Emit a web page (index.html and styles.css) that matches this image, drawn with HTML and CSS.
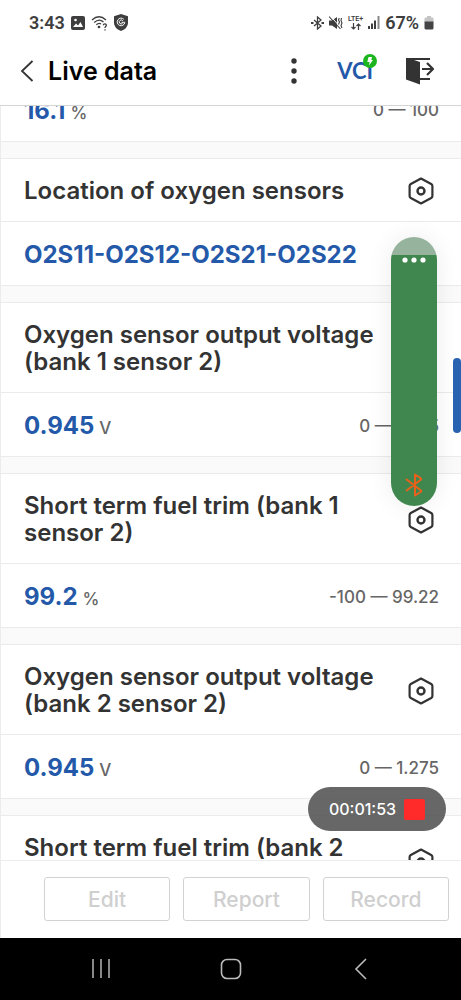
FILE: index.html
```html
<!DOCTYPE html>
<html lang="en">
<head>
<meta charset="utf-8">
<meta name="viewport" content="width=device-width, initial-scale=1">
<title>Live data</title>
<link rel="stylesheet" href="styles.css">
</head>
<body>
<svg class="defs" aria-hidden="true">
  <symbol id="hex" viewBox="0 0 28 28">
    <path d="M14 1.500 24.200 7Q25.400 7.700 25.400 9V19Q25.400 20.300 24.200 21L14 26.500 3.800 21Q2.600 20.300 2.600 19V9Q2.600 7.700 3.800 7Z" fill="none" stroke="#333" stroke-width="2.200" stroke-linejoin="round"/>
    <circle cx="14" cy="14" r="3.500" fill="none" stroke="#333" stroke-width="2.400"/>
  </symbol>
</svg>
<div class="app">
  <div class="status">
    <div class="status-group status-left">
      <span class="clock">3:43</span>
      <svg width="14" height="14" viewBox="0 0 14 14"><rect width="14" height="14" rx="2" fill="#3e3e3e"/><path d="M2 11 5 7.500 7 9.500 9.500 6 12 11Z" fill="#fff"/><circle cx="4.500" cy="4" r="1.300" fill="#fff"/></svg>
      <svg width="17" height="16" viewBox="0 0 17 16" fill="none" stroke="#3e3e3e" stroke-width="1.300"><path d="M1 5Q8 -1.500 15 5M3.200 7.500Q8 3 12.500 7M5.300 9.800Q8 7.500 10 9"/><circle cx="8" cy="12" r=".7"/><path d="M12.300 10.300C12.300 8.300 15.500 8.500 15.300 10.400 15.200 11.700 14 11.500 14 13M14 14.200V15.500"/></svg>
      <svg width="14" height="17" viewBox="0 0 14 17"><path d="M7 0 14 2.200V9Q14 14 7 17 0 14 0 9V2.200Z" fill="#3e3e3e"/><path d="M9.800 5.300A3.800 3.800 0 1 0 10.800 8.500M8.800 6.700A2 2 0 1 0 8.500 9.500M10.800 8.300H7.500" fill="none" stroke="#fff" stroke-width="1"/></svg>
    </div>
    <div class="status-group status-right">
      <svg width="13" height="14" viewBox="0 0 13 14" fill="none" stroke="#3e3e3e" stroke-width="1.300"><path d="M3 4 10 10 6.500 13V1L10 4 3 10"/><path d="M0 7H2.500M10.500 7H13" stroke-width="2"/></svg>
      <svg width="14" height="14" viewBox="0 0 14 14"><path d="M0 4.500H3L8 1V13L3 9.500H0Z" fill="#3e3e3e"/><path d="M1.500 0 12 12" stroke="#fff" stroke-width="1"/><path d="M0 .5 11.500 13M10.300 2 9.500 4 10.500 6 9.500 8.500M12.500 2 12 4.500 13 7 12 9.500 13 12" fill="none" stroke="#3e3e3e" stroke-width="1.100"/></svg>
      <span class="lte"><span>LTE+</span><svg width="10" height="7" viewBox="0 0 10 7" fill="none" stroke="#3e3e3e" stroke-width="1.200"><path d="M2.500 0V6M.5 4 2.500 6 4.500 4M7.500 7V1M5.500 3 7.500 1 9.500 3"/></svg></span>
      <svg width="12" height="13" viewBox="0 0 12 13" fill="#3e3e3e"><path d="M0 10H2V13H0ZM3 7.500H5V13H3ZM6 4.500H8V13H6Z"/><path d="M9.500 0H11.500V13H9.500Z" fill="#888"/></svg>
      <span class="battery">67%</span>
      <svg width="10" height="14" viewBox="0 0 10 14"><path d="M3 0H7V1.500H8.500Q9.500 1.500 9.500 2.500V6H.5V2.500Q.5 1.500 1.500 1.500H3Z" fill="#c4c4c4"/><path d="M.5 5.500H9.500V12Q9.500 13.500 8 13.500H2Q.5 13.500 .5 12Z" fill="#444"/></svg>
    </div>
  </div>

  <header class="topbar">
    <button class="icon-btn" aria-label="Back"><svg width="14" height="22" viewBox="0 0 14 22"><path d="M12.500 1 2 11 12.500 21" fill="none" stroke="#333" stroke-width="1.800"/></svg></button>
    <h1>Live data</h1>
    <button class="icon-btn more" aria-label="More"><svg width="6" height="28" viewBox="0 0 6 28" fill="#333"><circle cx="3" cy="4" r="2.700"/><circle cx="3" cy="14" r="2.700"/><circle cx="3" cy="24" r="2.700"/></svg></button>
    <button class="vci">VCI<svg class="vci-badge" width="14" height="14" viewBox="0 0 14 14" aria-hidden="true"><circle cx="7" cy="7" r="7" fill="#1db51d"/><path d="M5.500 3H9L8.300 6H10L6 11.500 6.600 8H4.300Z" fill="#fff"/></svg></button>
    <button class="icon-btn" aria-label="Exit"><svg width="28" height="28" viewBox="0 0 28 28"><path d="M0 1H24V3H8L14 5V27.500L0 22.500Z" fill="#333"/><path d="M14 22H24M16 12H26M21 6 27 12 21 18" fill="none" stroke="#333" stroke-width="2.200"/></svg></button>
  </header>

  <main class="list">
    <section class="card">
      <div class="reading"><span class="value">16.1<small>%</small></span><span class="range">0 — 100</span></div>
    </section>
    <section class="card">
      <div class="head"><h2>Location of oxygen sensors</h2><button class="icon-btn" aria-label="Settings"><svg width="28" height="28"><use href="#hex"/></svg></button></div>
      <div class="reading"><span class="value">O2S11-O2S12-O2S21-O2S22</span></div>
    </section>
    <section class="card">
      <div class="head"><h2>Oxygen sensor output voltage (bank 1 sensor 2)</h2><button class="icon-btn" aria-label="Settings"><svg width="28" height="28"><use href="#hex"/></svg></button></div>
      <div class="reading"><span class="value">0.945<small>V</small></span><span class="range">0 — 1.275</span></div>
    </section>
    <section class="card">
      <div class="head"><h2>Short term fuel trim (bank 1 sensor 2)</h2><button class="icon-btn" aria-label="Settings"><svg width="28" height="28"><use href="#hex"/></svg></button></div>
      <div class="reading"><span class="value">99.2<small>%</small></span><span class="range">-100 — 99.22</span></div>
    </section>
    <section class="card">
      <div class="head"><h2>Oxygen sensor output voltage (bank 2 sensor 2)</h2><button class="icon-btn" aria-label="Settings"><svg width="28" height="28"><use href="#hex"/></svg></button></div>
      <div class="reading"><span class="value">0.945<small>V</small></span><span class="range">0 — 1.275</span></div>
    </section>
    <section class="card">
      <div class="head"><h2>Short term fuel trim (bank 2 sensor 2)</h2><button class="icon-btn" aria-label="Settings"><svg width="28" height="28"><use href="#hex"/></svg></button></div>
    </section>
  </main>

  <footer class="actions">
    <button class="action" disabled>Edit</button>
    <button class="action" disabled>Report</button>
    <button class="action" disabled>Record</button>
  </footer>

  <nav class="sysnav">
    <button class="icon-btn" aria-label="Recent apps"><svg width="22" height="22" viewBox="0 0 22 22"><path d="M3 1V20M11 1V20M19 1V20" stroke="#aaa" stroke-width="1.600"/></svg></button>
    <button class="icon-btn" aria-label="Home"><svg width="22" height="22" viewBox="0 0 22 22"><rect x="1.500" y="1.500" width="19" height="19" rx="5.500" fill="none" stroke="#bbb" stroke-width="1.600"/></svg></button>
    <button class="icon-btn" aria-label="Back"><svg width="22" height="22" viewBox="0 0 22 22"><path d="M16 1 6 11 16 21" fill="none" stroke="#bbb" stroke-width="1.600"/></svg></button>
  </nav>

  <aside class="voltage" aria-label="Vehicle voltage">
    <svg width="24" height="6" viewBox="0 0 24 6" fill="#fff"><circle cx="3" cy="3" r="2.600"/><circle cx="12" cy="3" r="2.600"/><circle cx="21" cy="3" r="2.600"/></svg>
    <svg width="18" height="24" viewBox="0 0 18 24"><path d="M1 6 16 17.500Q16.500 18.500 15.500 19L10 22.500V1.500L15.500 5Q16.500 5.700 16 6.500L1 18" fill="none" stroke="#e8611c" stroke-width="2" stroke-linejoin="round"/></svg>
  </aside>
  <span class="scroll-handle"></span>
  <button class="recorder" aria-label="Stop recording"><span>00:01:53</span><i class="stop"></i></button>
</div>
</body>
</html>
```
FILE: styles.css
```css
* { box-sizing: border-box; }
body {
  margin: 0;
  font-family: Inter, "Open Sans", sans-serif;
  color: #333;
  background: #fff;
}
button {
  margin: 0;
  padding: 0;
  border: 0;
  background: none;
  font: inherit;
  color: inherit;
}
svg { display: block; }
.defs { position: absolute; width: 0; height: 0; }
.app {
  position: relative;
  display: flex;
  flex-direction: column;
  height: 100vh;
  overflow: hidden;
}
.icon-btn { display: flex; flex: none; }

.status {
  display: flex;
  justify-content: space-between;
  align-items: center;
  height: 40px;
  padding: 5px 27px 0 29px;
  color: #3e3e3e;
  font-family: Roboto, sans-serif;
  font-weight: 600;
}
.status-group { display: flex; align-items: center; }
.status-left { gap: 6px; }
.status-right { gap: 5px; }
.clock, .battery { font-size: 18px; }
.lte {
  display: flex;
  flex-direction: column;
  align-items: center;
  font-size: 7px;
  line-height: 8px;
}

.topbar {
  display: flex;
  align-items: center;
  height: 66px;
  padding: 0 27px 4px 20px;
  border-bottom: 1px solid #d5d5d5;
}
.topbar h1 {
  flex: 1;
  margin: 0 0 0 14px;
  font-size: 25px;
  font-weight: 600;
  color: #000;
}
.more { margin-right: 40px; }
.vci {
  position: relative;
  margin-right: 33px;
  color: #2459a9;
  font-family: Lato, sans-serif;
  font-size: 22px;
  font-weight: 700;
}
.vci-badge { position: absolute; top: -3px; right: -4px; }

.list {
  flex: 1;
  min-height: 0;
  overflow: hidden;
  display: flex;
  flex-direction: column;
  gap: 16px;
  background: #fafafa;
  border-left: 1px solid #ececec;
}
.card {
  flex: none;
  background: #fff;
  border-top: 1px solid #ebebeb;
  border-bottom: 1px solid #ebebeb;
}
.card:first-child { margin-top: -30px; }
.head {
  display: flex;
  align-items: center;
  justify-content: space-between;
  gap: 8px;
  padding: 18px 26px 17px 23px;
}
.head h2 {
  margin: 0;
  font-size: 24px;
  line-height: 27px;
  font-weight: 600;
}
.head .icon-btn { height: 27px; }
.reading {
  display: flex;
  align-items: center;
  justify-content: space-between;
  height: 64px;
  padding: 2px 22px 0 23px;
}
.head + .reading { border-top: 1px solid #ebebeb; }
.value {
  font-size: 24px;
  font-weight: 700;
  color: #2459a9;
}
.value small {
  margin-left: 5px;
  font-size: 17px;
  font-weight: 500;
  color: #666;
}
.range { font-size: 17px; font-weight: 500; color: #666; }

.actions {
  display: flex;
  gap: 13px;
  padding: 16px 12px 17px 43px;
  border-top: 1px solid #ececec;
  border-left: 1px solid #ececec;
  background: #fff;
}
.action {
  flex: 1;
  height: 44px;
  border: 1px solid #d2d2d2;
  border-radius: 3px;
  color: #cfcfcf;
  font-size: 21px;
  font-weight: 500;
}
.sysnav {
  display: flex;
  justify-content: center;
  align-items: center;
  gap: 108px;
  height: 62px;
  background: #000;
}

.voltage {
  position: absolute;
  top: 237px;
  right: 24px;
  display: flex;
  flex-direction: column;
  justify-content: space-between;
  align-items: center;
  width: 46px;
  height: 269px;
  padding: 20px 0 9px;
  border-radius: 23px;
  background: linear-gradient(#96b39e 18px, #40874f 18px);
  box-shadow: 0 0 24px rgba(0, 0, 0, 0.08);
}
.scroll-handle {
  position: absolute;
  top: 358px;
  right: 0;
  width: 8px;
  height: 75px;
  border-radius: 4px;
  background: #2862b0;
}
.recorder {
  position: absolute;
  right: 15px;
  bottom: 169px;
  display: flex;
  align-items: center;
  justify-content: center;
  gap: 8px;
  width: 138px;
  height: 44px;
  border-radius: 22px;
  background: rgba(82, 82, 82, 0.88);
  color: #fff;
  font-size: 16px;
  font-weight: 500;
}
.stop {
  width: 21px;
  height: 21px;
  border-radius: 2px;
  background: #ff2a2a;
}
```
